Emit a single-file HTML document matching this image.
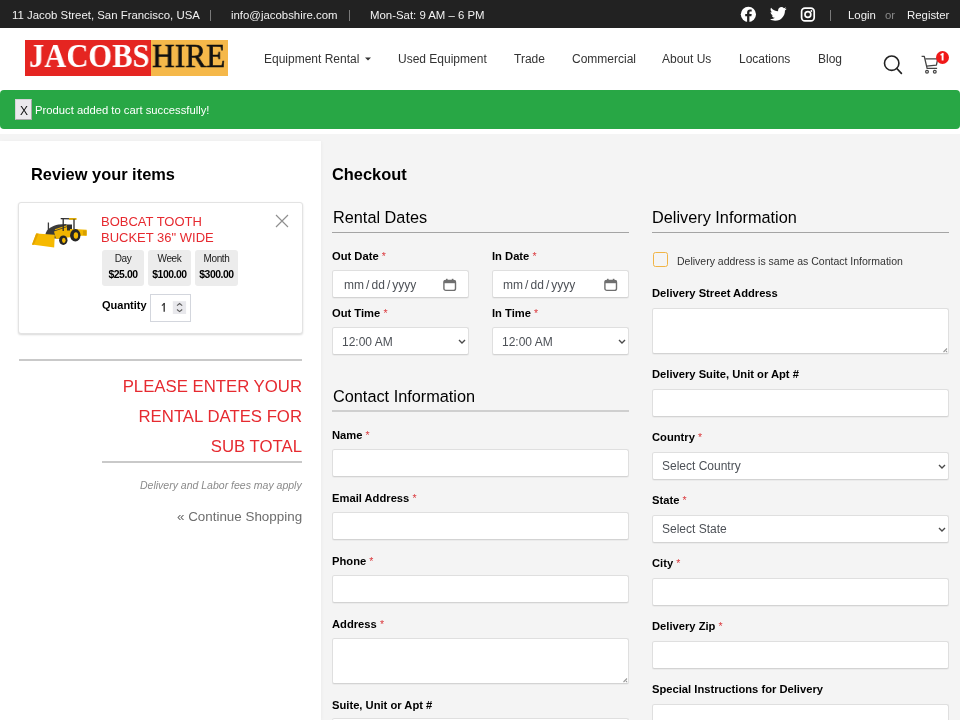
<!DOCTYPE html>
<html><head><meta charset="utf-8">
<style>
*{margin:0;padding:0;box-sizing:border-box}
html,body{width:960px;height:720px;overflow:hidden}
body{position:relative;background:#f4f4f4;font-family:"Liberation Sans",sans-serif;color:#111}
.a{position:absolute}
.t{position:absolute;white-space:nowrap;line-height:1;will-change:transform}
#top{left:0;top:0;width:960px;height:28px;background:#222}
#top .t{color:#f2f2f2;font-size:11.4px;top:10px}
.sep{position:absolute;width:1px;height:11px;top:10px;background:#7a7a7a}
#hdr{left:0;top:28px;width:960px;height:106px;background:#fff}
.nav{font-size:12px;color:#333;top:53px}
#alert{left:0;top:90px;width:960px;height:39px;background:#28a745;border-radius:4px}
#left{left:0;top:141px;width:320.5px;height:580px;background:#fff;box-shadow:1px 0 3px rgba(0,0,0,.03)}
.h16b{font-size:16.4px;font-weight:bold;color:#000}
.h16{font-size:16.3px;color:#000}
.lbl{font-size:11.2px;font-weight:bold;color:#000}
.req{color:#db3b3f;font-weight:normal;font-size:10.5px}
.inp{position:absolute;background:#fff;border:1px solid #dfdfdf;border-bottom-color:#d3d3d3;border-radius:2.5px;box-shadow:0 1px 0 rgba(0,0,0,.035)}
.ph{font-size:12px;color:#4d5157}
.line{position:absolute;height:1px;background:#a4a4a4}
</style></head><body>

<div id="top" class="a">
  <div class="t" style="left:11.5px">11 Jacob Street, San Francisco, USA</div>
  <div class="sep" style="left:210px"></div>
  <div class="t" style="left:231px">info@jacobshire.com</div>
  <div class="sep" style="left:349px"></div>
  <div class="t" style="left:370px">Mon-Sat: 9 AM – 6 PM</div>
  <svg class="a" style="left:740px;top:6px" width="17" height="17" viewBox="0 0 17 17"><circle cx="8.4" cy="8.3" r="7.6" fill="#fff"/><path d="M9.4 16.2V10.2h2l.3-2.3H9.4V6.6c0-.7.2-1.1 1.1-1.1h1.2V3.5c-.2 0-.9-.1-1.7-.1-1.7 0-2.9 1-2.9 2.9v1.6H5.2v2.3h1.9v6" fill="#222"/></svg>
  <svg class="a" style="left:770px;top:7px" width="17" height="14" viewBox="0 0 24 20"><path d="M23.6 2.4c-.9.4-1.8.6-2.8.8 1-.6 1.8-1.5 2.1-2.7-.9.6-2 1-3.1 1.2C18.9.7 17.6.1 16.3.1c-2.7 0-4.9 2.2-4.9 4.9 0 .4 0 .8.1 1.1C7.4 5.9 3.8 4 1.4 1 .9 1.7.7 2.6.7 3.5c0 1.7.9 3.2 2.2 4.1-.8 0-1.6-.2-2.2-.6v.1c0 2.4 1.7 4.4 3.9 4.8-.4.1-.8.2-1.3.2-.3 0-.6 0-.9-.1.6 2 2.4 3.4 4.6 3.4-1.7 1.3-3.8 2.1-6.1 2.1-.4 0-.8 0-1.2-.1 2.2 1.4 4.8 2.2 7.5 2.2 9.1 0 14-7.5 14-14v-.6c1-.7 1.8-1.6 2.4-2.5z" fill="#fff"/></svg>
  <svg class="a" style="left:800px;top:7px" width="16" height="15" viewBox="0 0 16 15"><rect x="1.6" y="1.2" width="12.6" height="12.6" rx="3.4" fill="none" stroke="#fff" stroke-width="1.7"/><circle cx="7.9" cy="7.5" r="2.9" fill="none" stroke="#fff" stroke-width="1.7"/><circle cx="11.4" cy="4" r="0.9" fill="#fff"/></svg>
  <div class="sep" style="left:830px"></div>
  <div class="t" style="left:847.5px">Login</div>
  <div class="t" style="left:885px;color:#8a8a8a">or</div>
  <div class="t" style="left:906.5px">Register</div>
</div>

<div id="hdr" class="a"></div>
<!-- logo -->
<div class="a" style="left:25px;top:40px;width:126px;height:36px;background:#e52521"></div>
<div class="a" style="left:151px;top:40px;width:77px;height:36px;background:#f5b84a"></div>
<div class="t" style="left:29px;top:38px;font-family:'Liberation Serif',serif;font-weight:bold;font-size:34.5px;color:#fff;transform:scaleX(0.885);transform-origin:0 0">JACOBS</div>
<div class="t" style="left:152px;top:38px;font-family:'Liberation Serif',serif;font-size:34.5px;color:#111;-webkit-text-stroke:0.6px #111;transform:scaleX(0.91);transform-origin:0 0">HIRE</div>

<div class="t nav" style="left:263.5px">Equipment Rental</div>
<svg class="a" style="left:364px;top:56px" width="8" height="6" viewBox="0 0 8 6"><path d="M1 1.5h6L4 4.5z" fill="#333"/></svg>
<div class="t nav" style="left:398px">Used Equipment</div>
<div class="t nav" style="left:513.5px">Trade</div>
<div class="t nav" style="left:571.5px">Commercial</div>
<div class="t nav" style="left:662px">About Us</div>
<div class="t nav" style="left:738.5px">Locations</div>
<div class="t nav" style="left:817.5px">Blog</div>
<svg class="a" style="left:880px;top:52px" width="26" height="26" viewBox="0 0 26 26"><circle cx="11.7" cy="11.2" r="7.2" fill="none" stroke="#222" stroke-width="1.6"/><path d="M16.8 16.5l4.6 4.8" stroke="#222" stroke-width="1.7" stroke-linecap="round"/></svg>
<svg class="a" style="left:918px;top:52px" width="24" height="24" viewBox="0 0 24 24"><path d="M3.6 4.3h2.7l2.8 12h10" fill="none" stroke="#444" stroke-width="1.3" stroke-linejoin="round"/><path d="M7.3 6.8h12.4l-1.3 6.4-10 .9" fill="none" stroke="#444" stroke-width="1.3" stroke-linejoin="round"/><circle cx="9" cy="19.8" r="1.4" fill="none" stroke="#444" stroke-width="1.2"/><circle cx="16.8" cy="19.8" r="1.4" fill="none" stroke="#444" stroke-width="1.2"/></svg>
<div class="a" style="left:935.8px;top:50.8px;width:13.2px;height:13.2px;border-radius:50%;background:#f01818"></div>
<svg class="a" style="left:938px;top:52px" width="9" height="10" viewBox="0 0 9 10"><path d="M4.6 1.6v6.9" stroke="#fff" stroke-width="1.9"/><path d="M5.4 1.3L2.6 3.2" stroke="#fff" stroke-width="1.4"/></svg>

<div id="alert" class="a"></div>
<div class="a" style="left:15px;top:99px;width:17px;height:21px;background:#ebe9ed;border:1px solid #d6d3d8;border-right-color:#a9a9a9;border-bottom-color:#a9a9a9"></div>
<div class="t" style="left:19.6px;top:105px;font-size:12px;color:#111">X</div>
<div class="t" style="left:35px;top:105px;font-size:11.25px;color:#fff">Product added to cart successfully!</div>

<!-- left panel -->
<div id="left" class="a"></div>
<div class="t h16b" style="left:30.6px;top:166px">Review your items</div>
<div class="a" style="left:18px;top:202px;width:285px;height:132px;background:#fff;border:1px solid #e3e3e3;border-radius:3px;box-shadow:0 1px 2px rgba(0,0,0,.15)"></div>
<!-- tractor -->
<svg class="a" style="left:28px;top:210px" width="64" height="42" viewBox="0 0 64 42">
  <path d="M20.4 12.5v10.5" stroke="#3a3a3a" stroke-width="1.3"/>
  <path d="M17.5 24c1-5 7-8.5 13-9.5l8-0.6 3 9-6 5.5H18z" fill="#3b3b3b"/>
  <path d="M26 21.5l13-4.5 5 3.5v6.5l-16 2z" fill="#f0b400"/>
  <path d="M27 19.8l12-4" stroke="#f0b400" stroke-width="1.1"/>
  <path d="M32.7 7.9l15.3 0.4v1.3l-15.3-0.4z" fill="#2b2b2b"/>
  <path d="M41 8.1h7.6v1.7H41z" fill="#e8b000"/>
  <path d="M35.2 9v12M46 9.3v10" stroke="#2b2b2b" stroke-width="1.3"/>
  <path d="M39 14.5h5v6h-5z" fill="#2e2e2e"/>
  <path d="M49.5 19.3l9.2 0.4v6.3l-9.2-0.4z" fill="#f2b800"/>
  <path d="M55 20.5h3.5v4.5H55z" fill="#d9a000"/>
  <path d="M42 19h8v3h-8z" fill="#f2b800"/>
  <ellipse cx="47.3" cy="25.3" rx="5.2" ry="6.2" fill="#262626"/><ellipse cx="47.9" cy="25.5" rx="2.2" ry="3.2" fill="#f2b800"/>
  <ellipse cx="35.3" cy="30.2" rx="4.2" ry="4.8" fill="#262626"/><ellipse cx="35.8" cy="30.3" rx="1.8" ry="2.6" fill="#f2b800"/>
  <path d="M8.2 23.4L26.8 24.8 26.2 37.4 4 34.6z" fill="#f6b900"/>
  <path d="M8.2 23.4l2.4 0.2-4.6 11.1H4z" fill="#e3a400"/>
</svg>
<div class="t" style="left:100.6px;top:213.7px;font-size:13px;color:#e62a30;line-height:15.6px">BOBCAT TOOTH<br>BUCKET 36" WIDE</div>
<svg class="a" style="left:275px;top:214px" width="14" height="14" viewBox="0 0 14 14"><path d="M1 1l12 12M13 1L1 13" stroke="#8f8f8f" stroke-width="1.15"/></svg>
<div class="a" style="left:102px;top:250px;width:42px;height:36px;background:#ececec;border-radius:3px"></div>
<div class="a" style="left:148px;top:250px;width:43px;height:36px;background:#ececec;border-radius:3px"></div>
<div class="a" style="left:195px;top:250px;width:43px;height:36px;background:#ececec;border-radius:3px"></div>
<div class="t" style="left:102px;width:42px;text-align:center;top:254px;font-size:10px;color:#1a1a1a;letter-spacing:-0.35px">Day</div>
<div class="t" style="left:148px;width:43px;text-align:center;top:254px;font-size:10px;color:#1a1a1a;letter-spacing:-0.35px">Week</div>
<div class="t" style="left:195px;width:43px;text-align:center;top:254px;font-size:10px;color:#1a1a1a;letter-spacing:-0.35px">Month</div>
<div class="t" style="left:102px;width:42px;text-align:center;top:270px;font-size:10.4px;font-weight:bold;color:#000;letter-spacing:-0.45px">$25.00</div>
<div class="t" style="left:148px;width:43px;text-align:center;top:270px;font-size:10.4px;font-weight:bold;color:#000;letter-spacing:-0.45px">$100.00</div>
<div class="t" style="left:195px;width:43px;text-align:center;top:270px;font-size:10.4px;font-weight:bold;color:#000;letter-spacing:-0.45px">$300.00</div>
<div class="t lbl" style="left:101.5px;top:300px;font-size:11px">Quantity</div>
<div class="a" style="left:150px;top:294px;width:41px;height:28px;background:#fff;border:1px solid #d3d6dd"></div>
<svg class="a" style="left:150px;top:294px" width="41" height="28" viewBox="0 0 41 28"><path d="M14.2 9v8.8" stroke="#3a3a3a" stroke-width="1.4"/><path d="M14.6 9.2l-2.7 2.4" stroke="#3a3a3a" stroke-width="1.2"/><rect x="22.8" y="7.2" width="13.3" height="12.8" fill="#e8e8ec"/><path d="M27 11.6l2.6-2.1 2.6 2.1M27 15.5l2.6 2.1 2.6-2.1" fill="none" stroke="#5a5a5a" stroke-width="1.1"/></svg>

<div class="a" style="left:19px;top:359px;width:283px;height:2px;background:#c9c9c9"></div>
<div class="t" style="right:658px;top:371.5px;font-size:16.75px;color:#e62a30;line-height:30px;text-align:right;white-space:normal;width:220px">PLEASE ENTER YOUR<br>RENTAL DATES FOR<br>SUB TOTAL</div>
<div class="a" style="left:102px;top:461px;width:200px;height:2px;background:#c9c9c9"></div>
<div class="t" style="right:658px;top:480px;font-size:10.5px;font-style:italic;color:#8a8a8a">Delivery and Labor fees may apply</div>
<div class="t" style="right:658px;top:510px;font-size:13.4px;color:#6e6e6e">« Continue Shopping</div>

<!-- right -->
<div class="t h16b" style="left:332px;top:166px">Checkout</div>

<div class="t h16" style="left:332.5px;top:209px">Rental Dates</div>
<div class="line" style="left:332px;top:232px;width:297px"></div>
<div class="t lbl" style="left:332px;top:251px">Out Date <span class="req">*</span></div>
<div class="inp" style="left:332px;top:270px;width:137px;height:28px"></div>
<div class="t ph" style="left:343.5px;top:279px;word-spacing:-1.25px">mm / dd / yyyy</div>
<svg class="a" style="left:443px;top:278px" width="14" height="14" viewBox="0 0 14 14"><rect x="0.9" y="2.4" width="11.6" height="10" rx="2" fill="none" stroke="#6f6f6f" stroke-width="1.4"/><rect x="0.9" y="2.4" width="11.6" height="2.8" fill="#6f6f6f"/><rect x="3" y="0.8" width="1.6" height="2.4" fill="#6f6f6f"/><rect x="8.8" y="0.8" width="1.6" height="2.4" fill="#6f6f6f"/></svg>
<div class="t lbl" style="left:492px;top:251px">In Date <span class="req">*</span></div>
<div class="inp" style="left:492px;top:270px;width:137px;height:28px"></div>
<div class="t ph" style="left:503px;top:279px;word-spacing:-1.25px">mm / dd / yyyy</div>
<svg class="a" style="left:603.5px;top:278px" width="14" height="14" viewBox="0 0 14 14"><rect x="0.9" y="2.4" width="11.6" height="10" rx="2" fill="none" stroke="#6f6f6f" stroke-width="1.4"/><rect x="0.9" y="2.4" width="11.6" height="2.8" fill="#6f6f6f"/><rect x="3" y="0.8" width="1.6" height="2.4" fill="#6f6f6f"/><rect x="8.8" y="0.8" width="1.6" height="2.4" fill="#6f6f6f"/></svg>
<div class="t lbl" style="left:332px;top:308px">Out Time <span class="req">*</span></div>
<div class="inp" style="left:332px;top:327px;width:137px;height:28px"></div>
<div class="t ph" style="left:342px;top:336px">12:00 AM</div>
<svg class="a" style="left:456.5px;top:338px" width="10" height="8" viewBox="0 0 10 8"><path d="M2 2l3 3 3-3" fill="none" stroke="#4a4a4a" stroke-width="1.35"/></svg>
<div class="t lbl" style="left:492px;top:308px">In Time <span class="req">*</span></div>
<div class="inp" style="left:492px;top:327px;width:137px;height:28px"></div>
<div class="t ph" style="left:502px;top:336px">12:00 AM</div>
<svg class="a" style="left:616.5px;top:338px" width="10" height="8" viewBox="0 0 10 8"><path d="M2 2l3 3 3-3" fill="none" stroke="#4a4a4a" stroke-width="1.35"/></svg>

<div class="t h16" style="left:332.5px;top:388px">Contact Information</div>
<div class="a" style="left:332px;top:410px;width:297px;height:2px;background:#cfcfcf"></div>
<div class="t lbl" style="left:332px;top:430px">Name <span class="req">*</span></div>
<div class="inp" style="left:332px;top:449px;width:297px;height:28px"></div>
<div class="t lbl" style="left:332px;top:493px">Email Address <span class="req">*</span></div>
<div class="inp" style="left:332px;top:512px;width:297px;height:28px"></div>
<div class="t lbl" style="left:332px;top:556px">Phone <span class="req">*</span></div>
<div class="inp" style="left:332px;top:575px;width:297px;height:28px"></div>
<div class="t lbl" style="left:332px;top:619px">Address <span class="req">*</span></div>
<div class="inp" style="left:332px;top:638px;width:297px;height:46px"></div>
<svg class="a" style="left:622px;top:677px" width="6" height="6" viewBox="0 0 6 6"><path d="M5 1.5L1.5 5M5 4L4 5" stroke="#999" stroke-width="1.1"/></svg>
<div class="t lbl" style="left:332px;top:700px">Suite, Unit or Apt #</div>
<div class="inp" style="left:332px;top:718px;width:297px;height:28px"></div>

<div class="t h16" style="left:652px;top:209px">Delivery Information</div>
<div class="line" style="left:652px;top:232px;width:297px"></div>
<div class="a" style="left:653px;top:252px;width:15px;height:15px;border:1.8px solid #f1b445;border-radius:2.5px;background:transparent"></div>
<div class="t" style="left:676.5px;top:256px;font-size:10.5px;color:#333">Delivery address is same as Contact Information</div>
<div class="t lbl" style="left:652px;top:288px">Delivery Street Address</div>
<div class="inp" style="left:652px;top:308px;width:297px;height:46px"></div>
<svg class="a" style="left:942px;top:347px" width="6" height="6" viewBox="0 0 6 6"><path d="M5 1.5L1.5 5M5 4L4 5" stroke="#999" stroke-width="1.1"/></svg>
<div class="t lbl" style="left:652px;top:369px">Delivery Suite, Unit or Apt #</div>
<div class="inp" style="left:652px;top:389px;width:297px;height:28px"></div>
<div class="t lbl" style="left:652px;top:432px">Country <span class="req">*</span></div>
<div class="inp" style="left:652px;top:452px;width:297px;height:28px"></div>
<div class="t ph" style="left:661.5px;top:460px">Select Country</div>
<svg class="a" style="left:936.5px;top:463px" width="10" height="8" viewBox="0 0 10 8"><path d="M2 2l3 3 3-3" fill="none" stroke="#4a4a4a" stroke-width="1.35"/></svg>
<div class="t lbl" style="left:652px;top:495px">State <span class="req">*</span></div>
<div class="inp" style="left:652px;top:515px;width:297px;height:28px"></div>
<div class="t ph" style="left:661.5px;top:523px">Select State</div>
<svg class="a" style="left:936.5px;top:526px" width="10" height="8" viewBox="0 0 10 8"><path d="M2 2l3 3 3-3" fill="none" stroke="#4a4a4a" stroke-width="1.35"/></svg>
<div class="t lbl" style="left:652px;top:558px">City <span class="req">*</span></div>
<div class="inp" style="left:652px;top:578px;width:297px;height:28px"></div>
<div class="t lbl" style="left:652px;top:621px">Delivery Zip <span class="req">*</span></div>
<div class="inp" style="left:652px;top:641px;width:297px;height:28px"></div>
<div class="t lbl" style="left:652px;top:684px">Special Instructions for Delivery</div>
<div class="inp" style="left:652px;top:704px;width:297px;height:46px"></div>

</body></html>
